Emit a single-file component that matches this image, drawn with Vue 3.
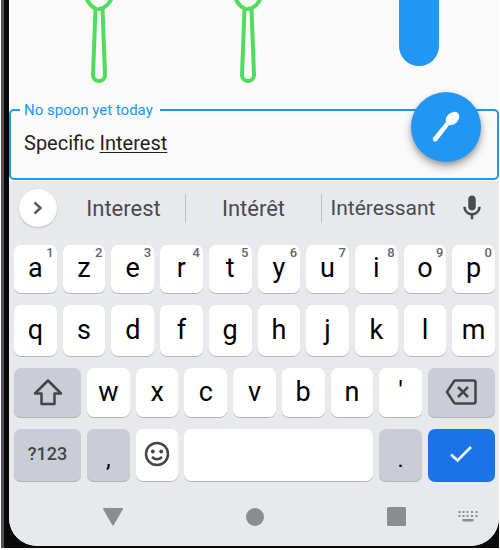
<script setup>
import { computed, ref } from 'vue'

const note = ref('Specific Interest')
const committed = computed(() => note.value.slice(0, note.value.lastIndexOf(' ') + 1))
const composing = computed(() => note.value.slice(note.value.lastIndexOf(' ') + 1))

const suggestions = ['Interest', 'Intérêt', 'Intéressant']
const topRow = [...'azertyuiop'].map((letter, i) => ({ letter, digit: (i + 1) % 10 }))
const homeRow = [...'qsdfghjklm']
const bottomRow = [..."wxcvbn'"]

function type(text) {
  note.value += text
}
function erase() {
  note.value = note.value.slice(0, -1)
}
function pick(word) {
  note.value = committed.value + word
}
</script>

<template>
  <div class="device">
    <main class="screen">
      <section class="day">
        <svg v-for="n in 2" :key="n" class="spoon" width="34" height="86" viewBox="0 0 34 86" aria-hidden="true">
          <path d="M4 -3 C6 3 9 6.500 13.500 8.500 L11 75 A6 6 0 0 0 23 75 L20.500 8.500 M17 9 C23 8.500 28 3 30 -3" />
        </svg>
        <div class="level"></div>
      </section>

      <div class="composer">
        <fieldset class="field">
          <legend><label for="note">No spoon yet today</label></legend>
          <div class="entry">
            <input id="note" v-model="note" type="text" autocomplete="off" spellcheck="false" />
            <div class="marks" aria-hidden="true">{{ committed }}<u>{{ composing }}</u></div>
          </div>
        </fieldset>
        <button class="fab" type="button" aria-label="Add spoon">
          <svg width="34" height="34" viewBox="0 2 34 34" aria-hidden="true">
            <ellipse cx="23.500" cy="10.500" rx="7.600" ry="5.700" transform="rotate(-43 23.500 10.500)" />
            <path d="M17 14 L20.200 17 L8.200 32.500 A2.400 2.400 0 0 1 4.300 29.500 Z" />
          </svg>
        </button>
      </div>

      <section class="keyboard">
        <div class="strip">
          <button class="expand" type="button" aria-label="More tools">
            <svg width="12" height="14" viewBox="0 0 12 14" aria-hidden="true"><path d="M2.500 1.500 L8.500 7 L2.500 12.500" /></svg>
          </button>
          <button
            v-for="word in suggestions"
            :key="word"
            class="word"
            :class="{ long: word.length > 10 }"
            type="button"
            @click="pick(word)"
          >{{ word }}</button>
          <button class="mic" type="button" aria-label="Voice input">
            <svg width="30" height="30" viewBox="0 0 24 24" aria-hidden="true">
              <path d="M12 14c1.660 0 3-1.340 3-3V5c0-1.660-1.340-3-3-3S9 3.340 9 5v6c0 1.660 1.340 3 3 3zm5-3c0 2.760-2.240 5-5 5s-5-2.240-5-5H5c0 3.530 2.610 6.430 6 6.920V21h2v-3.080c3.390-.490 6-3.390 6-6.920h-2z" />
            </svg>
          </button>
        </div>

        <div class="keys">
          <div class="row">
            <button v-for="key in topRow" :key="key.letter" class="key" type="button" @click="type(key.letter)">
              {{ key.letter }}<span class="digit">{{ key.digit }}</span>
            </button>
          </div>
          <div class="row">
            <button v-for="letter in homeRow" :key="letter" class="key" type="button" @click="type(letter)">{{ letter }}</button>
          </div>
          <div class="row">
            <button class="key wide muted" type="button" aria-label="Shift">
              <svg width="30" height="28" viewBox="0 0 30 28" aria-hidden="true">
                <path class="line" d="M15 2.500 L28 15.500 H21.500 V26 H8.500 V15.500 H2 Z" />
              </svg>
            </button>
            <button v-for="letter in bottomRow" :key="letter" class="key" type="button" @click="type(letter)">{{ letter }}</button>
            <button class="key wide muted" type="button" aria-label="Delete" @click="erase">
              <svg width="32" height="26" viewBox="0 0 32 26" aria-hidden="true">
                <path class="line" d="M10.500 1.500 H28.500 Q30.500 1.500 30.500 3.500 V22.500 Q30.500 24.500 28.500 24.500 H10.500 Q9.500 24.500 9 23.700 L2 13 L9 2.300 Q9.500 1.500 10.500 1.500 Z M13 8 L23 18 M23 8 L13 18" />
              </svg>
            </button>
          </div>
          <div class="row">
            <button class="key wide muted symbols" type="button">?123</button>
            <button class="key muted point" type="button" @click="type(',')">,</button>
            <button class="key" type="button" aria-label="Emoji">
              <svg width="26" height="26" viewBox="0 0 26 26" aria-hidden="true">
                <circle class="line" cx="13" cy="13" r="11" />
                <circle cx="8.800" cy="10.500" r="1.900" />
                <circle cx="17.200" cy="10.500" r="1.900" />
                <path class="line" d="M8 16 Q13 20.500 18 16" />
              </svg>
            </button>
            <button class="key space" type="button" aria-label="Space" @click="type(' ')"></button>
            <button class="key muted point" type="button" @click="type('.')">.</button>
            <button class="key wide enter" type="button" aria-label="Done">
              <svg width="24" height="18" viewBox="0 0 24 18" aria-hidden="true"><path d="M2 9.500 L8.500 15.500 L22 2" /></svg>
            </button>
          </div>
        </div>

        <nav class="system">
          <button type="button" aria-label="Back">
            <svg width="20" height="18" viewBox="0 0 20 18" aria-hidden="true"><path d="M1 0 H19 Q20.500 0 19.700 1.500 L10.800 17 Q10 18.300 9.200 17 L0.300 1.500 Q-0.500 0 1 0 Z" /></svg>
          </button>
          <button type="button" aria-label="Home">
            <svg width="18" height="18" viewBox="0 0 18 18" aria-hidden="true"><circle cx="9" cy="9" r="9" /></svg>
          </button>
          <button type="button" aria-label="Recent apps">
            <svg width="19" height="19" viewBox="0 0 19 19" aria-hidden="true"><rect width="19" height="19" rx="1.500" /></svg>
          </button>
          <button type="button" aria-label="Switch keyboard">
            <svg width="20" height="11" viewBox="0 0 20 11" aria-hidden="true">
              <path d="M0.500 0h2v2h-2zM4.500 0h2v2h-2zM8.500 0h2v2h-2zM13 0h2v2h-2zM17.500 0h2v2h-2zM0.500 4h2v2h-2zM4.500 4h2v2h-2zM8.500 4h2v2h-2zM13 4h2v2h-2zM17.500 4h2v2h-2zM4.500 8h11v2.500h-11z" />
            </svg>
          </button>
        </nav>
      </section>
    </main>
  </div>
</template>

<style>
body {
  background: #fff;
}
</style>

<style scoped>
.device {
  margin: 0 1px;
  padding: 0 0 2px 5px;
  border-left: 3px solid #4d5057;
  background: #090909;
  font-family: Roboto, "Liberation Sans", sans-serif;
}

.screen {
  overflow: hidden;
  border-radius: 0 0 28px 28px;
  background: #fafafa;
}

button {
  display: flex;
  align-items: center;
  justify-content: center;
  margin: 0;
  padding: 0;
  border: 0;
  background: none;
  color: inherit;
  font: inherit;
}

svg {
  display: block;
}

.day {
  display: grid;
  grid-template-columns: 149fr 149fr 177fr;
  justify-items: center;
  align-items: start;
  height: 101px;
  padding-left: 15px;
}

.spoon {
  fill: none;
  stroke: #52dc5c;
  stroke-width: 4;
  stroke-linecap: round;
  stroke-linejoin: round;
}

.level {
  width: 40px;
  height: 66px;
  margin-left: 17px;
  border-radius: 0 0 20px 20px;
  background: #2196f3;
}

.composer {
  position: relative;
  padding-bottom: 1px;
}

.field {
  min-width: 0;
  margin: 0;
  padding: 0 9px 11px;
  border: 2px solid #2196f3;
  border-radius: 5px;
}

.field legend {
  padding: 0 7px 0 4px;
  color: #2196f3;
  font-size: 15px;
  line-height: 18px;
}

.entry {
  position: relative;
  padding-left: 4px;
  color: #1f1f1f;
  font-size: 20px;
  line-height: 48px;
}

.entry input {
  display: block;
  width: 100%;
  height: 48px;
  padding: 0;
  border: 0;
  outline: 0;
  background: none;
  color: inherit;
  font: inherit;
}

/* Underlines the word being composed, over the input's own text */
.marks {
  position: absolute;
  inset: 0 0 0 4px;
  color: transparent;
  white-space: pre;
  pointer-events: none;
}

.marks u {
  text-decoration: underline 1px #1f1f1f;
  text-decoration-skip-ink: none;
  text-underline-offset: 2px;
}

.fab {
  position: absolute;
  top: -9px;
  right: 18px;
  width: 70px;
  height: 70px;
  border-radius: 50%;
  background: #2196f3;
  box-shadow: 0 5px 9px rgba(0, 0, 0, 0.3), 0 2px 4px rgba(0, 0, 0, 0.15);
}

.fab svg {
  fill: #fff;
}

.keyboard {
  background: #e8e9ed;
  color: #000;
}

.strip {
  display: grid;
  grid-template-columns: 53px 124fr 136fr 122fr 55px;
  align-items: center;
  height: 54px;
  color: #4a4b4d;
  font-size: 22px;
}

.expand {
  width: 38px;
  height: 38px;
  margin-left: 10px;
  border-radius: 50%;
  background: #fff;
  box-shadow: 0 1px 2px rgba(0, 0, 0, 0.2);
}

.expand svg {
  fill: none;
  stroke: #58595b;
  stroke-width: 2.500;
}

.word {
  height: 29px;
  border-right: 1px solid #bfc0c4;
}

.word:nth-child(4) {
  border-right: 0;
}

.long {
  font-size: 21px;
}

.mic svg {
  fill: #4a4b4d;
}

.keys {
  display: grid;
  grid-template-rows: 49px 52px 50px 53px;
  gap: 11px;
  padding: 10px 4px 0 5px;
}

.row {
  display: grid;
  grid-template-columns: repeat(20, 1fr);
  gap: 6px;
}

.key {
  position: relative;
  grid-column: span 2;
  padding-bottom: 3px;
  border-radius: 7px;
  background: #fff;
  box-shadow: inset 0 -1px 0 #b4b5b9;
  font-size: 27px;
  line-height: 32px;
}

.key svg {
  fill: #444547;
}

.key .line {
  fill: none;
  stroke: #444547;
  stroke-width: 2.500;
  stroke-linejoin: round;
}

.wide {
  grid-column: span 3;
}

.space {
  grid-column: span 8;
}

.muted {
  background: #cacdd5;
}

.digit {
  position: absolute;
  top: 0;
  right: 3px;
  color: #656668;
  font-size: 13px;
  font-weight: 500;
  line-height: 16px;
}

.symbols {
  color: #444547;
  font-size: 18px;
  font-weight: 500;
}

.point {
  align-items: flex-end;
  padding-bottom: 7px;
  font-size: 24px;
}

.enter {
  background: #1b73e8;
  box-shadow: none;
}

.enter svg {
  fill: none;
  stroke: #fff;
  stroke-width: 2.500;
}

.system {
  display: grid;
  grid-template-columns: 82fr 202fr 81fr 62fr;
  height: 59px;
  padding: 5px 0 0 63px;
}

.system svg {
  fill: #8c8d8f;
}
</style>
